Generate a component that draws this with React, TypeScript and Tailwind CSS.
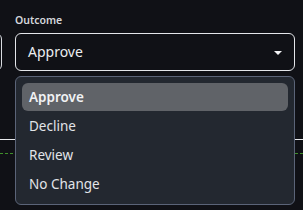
import React from "react";

export default function App() {
  const items = ["Approve", "Decline", "Review", "No Change"];
  return (
    <div className="relative w-[303px] h-[210px] overflow-hidden bg-[#101116] text-[#e8eaed] font-['Noto_Sans','Open_Sans',sans-serif]">
      <div className="flex gap-[13px] pt-[13px]">
        <div className="-ml-[98px] w-[100px] shrink-0 flex flex-col">
          <div className="h-[14px] mb-[6px]" />
          <div className="h-[38px] rounded-md border border-[#d9dce1]" />
        </div>
        <div className="w-[280px] shrink-0 flex flex-col">
          <div className="h-[14px] mb-[6px] text-[10.5px] leading-[14px] font-semibold text-[#d4d7dc]">
            Outcome
          </div>
          <div className="h-[38px] rounded-md border border-[#e4e6ea] flex items-center justify-between pl-[12px] pr-[12px]">
            <span className="text-[14px] leading-[20px] text-[#eceef1]">Approve</span>
            <svg width="8" height="4" viewBox="0 0 8 4" className="mt-[1px]">
              <path d="M0 0 L8 0 L4 4 Z" fill="#f3f4f6" />
            </svg>
          </div>
        </div>
      </div>
      <div className="mt-[68px] h-px bg-[#e8eaed]" />
      <div className="mt-[13px] border-t border-dashed border-[#3f8f2a]" />

      <div className="absolute left-[15px] top-[76px] w-[280px] h-[129px] rounded-md border border-[#5b6478] bg-[#232830] p-[6px] flex flex-col gap-[1px]">
        {items.map((it, i) => (
          <div
            key={it}
            className={
              i === 0
                ? "h-[28px] rounded-md bg-[#606368] px-[7px] flex items-center text-[13.5px] font-semibold text-[#f1f2f4]"
                : "h-[28px] rounded-md px-[7px] flex items-center text-[13.5px] text-[#e2e4e8]"
            }
          >
            {it}
          </div>
        ))}
      </div>
    </div>
  );
}
